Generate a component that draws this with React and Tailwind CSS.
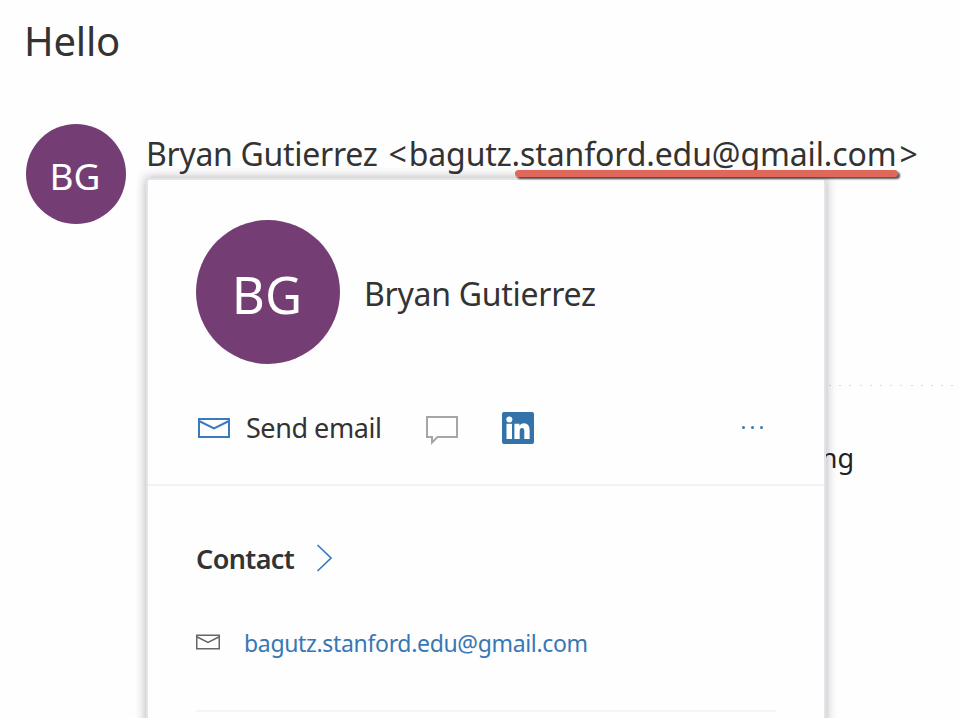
function MailIcon({ className }) {
  return (
    <svg viewBox="0 0 32 20" className={className} fill="none" stroke="currentColor" strokeWidth="2">
      <path d="M1 1H31V19H1Z" />
      <path d="M1 3L16 10.5L31 3" />
    </svg>
  );
}

function ChatIcon() {
  return (
    <svg viewBox="0 0 32 30" className="mt-1.5 h-[30px] w-8 shrink-0 text-[#a5a5aa]" fill="none" stroke="currentColor" strokeWidth="2">
      <path d="M1 1H31V21H11.500L6 26.500V21H1Z" />
    </svg>
  );
}

function LinkedInIcon() {
  return (
    <svg viewBox="0 0 32 32" className="size-8 shrink-0">
      <rect width="32" height="32" rx="2" fill="#3473aa" />
      <g fill="white">
        <circle cx="7.3" cy="7.4" r="3" />
        <path d="M4.500 11.800H10V27H4.500Z" />
        <path d="M12.400 11.800H17.400V13.800C18.400 12.200 19.800 11.300 21.800 11.300C26 11.300 27.600 14.300 27.600 18.500V27H22.300V19.700C22.300 17.800 22.100 16 20.100 16C18.100 16 17.700 17.500 17.700 19.500V27H12.400Z" />
      </g>
    </svg>
  );
}

function ContactCard() {
  return (
    <section className="absolute top-[180px] left-[148px] h-[560px] w-[676px] bg-[#fefefe] shadow-[0_0_0_2px_#e6e3e8,0_0_10px_2px_rgba(60,45,65,0.4)]">
      <div className="flex h-[184px] items-center gap-6 pt-10 pl-12">
        <div className="flex size-36 items-center justify-center rounded-full bg-[#743e74] pt-1 pr-0.5 text-[51px] text-white">
          BG
        </div>
        <div className="pt-1 text-[32px] tracking-[-0.27px] whitespace-nowrap">Bryan Gutierrez</div>
      </div>

      <div className="flex h-[122px] items-center border-b-2 border-[#f4f1f5] pt-2 pl-[50px] text-[27px]">
        <MailIcon className="h-5 w-8 shrink-0 text-[#3a7bbd]" />
        <span className="ml-4 w-[180px] tracking-[-0.45px] whitespace-nowrap">Send email</span>
        <ChatIcon />
        <span className="ml-11">
          <LinkedInIcon />
        </span>
        <span className="mr-[61px] mb-0.5 ml-auto flex gap-1.5">
          <i className="size-[3px] rounded-full bg-[#3a78b4]" />
          <i className="size-[3px] rounded-full bg-[#3a78b4]" />
          <i className="size-[3px] rounded-full bg-[#3a78b4]" />
        </span>
      </div>

      <div className="px-12">
        <h2 className="flex h-[141px] items-center pb-[5px] pt-1 text-[27px] font-semibold">
          <span className="w-[120px] pt-[7px] tracking-[-0.6px]">Contact</span>
          <svg viewBox="0 0 16 28" className="mt-1 h-7 w-4 text-[#3a7bbd]" fill="none" stroke="currentColor" strokeWidth="1.7">
            <path d="M1.500 1L15 14L1.500 27" />
          </svg>
        </h2>
        <div className="flex h-[85px] items-start border-b-2 border-[#f5f3f6] text-[23px] text-[#3777b5]">
          <MailIcon className="mt-[7px] h-4 w-6 text-[#666]" />
          <span className="ml-6 -mt-px tracking-[-0.33px] whitespace-nowrap">bagutz.stanford.edu@gmail.com</span>
        </div>
      </div>
    </section>
  );
}

export default function App() {
  return (
    <main className="relative h-[718px] w-[960px] overflow-hidden bg-[#fefefe] font-['Noto_Sans',sans-serif] text-[#333]">
      <h1 className="h-[124px] pt-[11px] pl-6 text-[40px] tracking-[-0.2px]">Hello</h1>

      <header className="flex h-[261px] items-start gap-5 pl-[26px]">
        <div className="flex size-[100px] shrink-0 items-center justify-center rounded-full bg-[#743e74] pt-[3px] pr-0.5 text-[37px] text-white">
          BG
        </div>
        <div className="pt-1.5 text-[32px] whitespace-nowrap">
          <span className="mr-[3px] tracking-[-0.3px]">Bryan Gutierrez </span>
          <span className="mr-0.5">&lt;</span>
          <span className="mr-[3px] tracking-[-0.13px]">bagutz.stanford.edu@gmail.com</span>
          <span>&gt;</span>
        </div>
      </header>

      <div className="ml-[829px] h-px bg-[repeating-linear-gradient(90deg,#d8d8d8_0_2px,transparent_2px_10.2px)]" />
      <p className="mr-[106px] pt-[52px] text-right text-[27px] text-[#222]">ng</p>

      <ContactCard />
      <div className="absolute top-[170px] left-[515px] h-[7px] w-[383px] rounded-full bg-[#e0685a] shadow-[2px_2px_2px_rgba(40,40,40,0.8)]" />
    </main>
  );
}
